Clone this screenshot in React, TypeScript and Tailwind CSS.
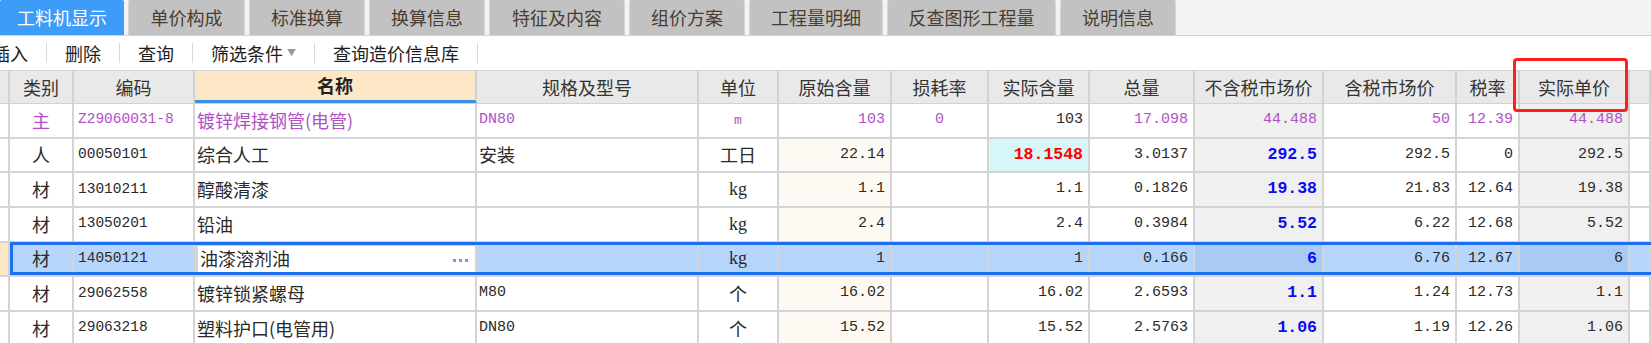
import React from "react";

type Row = {
  type: string;
  code: string;
  name: string;
  spec: string;
  unit: string;
  orig: string;
  loss: string;
  actual: string;
  total: string;
  exTax: string;
  inTax: string;
  rate: string;
  price: string;
  main?: boolean;
  hiActual?: boolean;
  selected?: boolean;
};

const rows: Row[] = [
  { type: "主", code: "Z29060031-8", name: "镀锌焊接钢管(电管)", spec: "DN80", unit: "m", orig: "103", loss: "0", actual: "103", total: "17.098", exTax: "44.488", inTax: "50", rate: "12.39", price: "44.488", main: true },
  { type: "人", code: "00050101", name: "综合人工", spec: "安装", unit: "工日", orig: "22.14", loss: "", actual: "18.1548", total: "3.0137", exTax: "292.5", inTax: "292.5", rate: "0", price: "292.5", hiActual: true },
  { type: "材", code: "13010211", name: "醇酸清漆", spec: "", unit: "kg", orig: "1.1", loss: "", actual: "1.1", total: "0.1826", exTax: "19.38", inTax: "21.83", rate: "12.64", price: "19.38" },
  { type: "材", code: "13050201", name: "铅油", spec: "", unit: "kg", orig: "2.4", loss: "", actual: "2.4", total: "0.3984", exTax: "5.52", inTax: "6.22", rate: "12.68", price: "5.52" },
  { type: "材", code: "14050121", name: "油漆溶剂油", spec: "", unit: "kg", orig: "1", loss: "", actual: "1", total: "0.166", exTax: "6", inTax: "6.76", rate: "12.67", price: "6", selected: true },
  { type: "材", code: "29062558", name: "镀锌锁紧螺母", spec: "M80", unit: "个", orig: "16.02", loss: "", actual: "16.02", total: "2.6593", exTax: "1.1", inTax: "1.24", rate: "12.73", price: "1.1" },
  { type: "材", code: "29063218", name: "塑料护口(电管用)", spec: "DN80", unit: "个", orig: "15.52", loss: "", actual: "15.52", total: "2.5763", exTax: "1.06", inTax: "1.19", rate: "12.26", price: "1.06" },
];

const tabs = [
  { label: "工料机显示", w: "w-[124px]", active: true },
  { label: "单价构成", w: "w-[117px]" },
  { label: "标准换算", w: "w-[116px]" },
  { label: "换算信息", w: "w-[116px]" },
  { label: "特征及内容", w: "w-[136px]" },
  { label: "组价方案", w: "w-[116px]" },
  { label: "工程量明细", w: "w-[134px]" },
  { label: "反查图形工程量", w: "w-[169px]" },
  { label: "说明信息", w: "w-[116px]" },
];

const GRID =
  "grid grid-cols-[10px_64px_121px_282px_222px_80px_113px_97px_101px_105px_129px_133px_63px_110px_1fr]";

const CJK = "font-['Noto_Sans_CJK_SC',sans-serif]";
const MONO = "font-['Liberation_Mono','Noto_Sans_CJK_SC',monospace]";

const headers = [
  "",
  "类别",
  "编码",
  "名称",
  "规格及型号",
  "单位",
  "原始含量",
  "损耗率",
  "实际含量",
  "总量",
  "不含税市场价",
  "含税市场价",
  "税率",
  "实际单价",
  "",
];

function Sep() {
  return <div className="w-px h-[20px] bg-[#d9d9d9]" />;
}

export default function App() {
  return (
    <div className={`w-[1651px] h-[343px] overflow-hidden bg-white relative ${CJK}`}>
      {/* Tab bar */}
      <div className="h-[36px] bg-[#f3f3f3] border-b border-[#d4d4d4] flex gap-[4px] overflow-hidden">
        {tabs.map((t) => (
          <div
            key={t.label}
            className={`${t.w} shrink-0 h-full flex items-center justify-center text-[18px] rounded-t-[2px] ${
              t.active
                ? "bg-[#3d9cf7] text-white"
                : "bg-[#c2c2c2] text-[#4a3d31] border-x border-[#d6d6d6]"
            }`}
          >
            {t.label}
          </div>
        ))}
      </div>

      {/* Toolbar */}
      <div className="h-[34px] flex items-center gap-[18px] text-[18px] text-[#1e1e1e] overflow-hidden">
        <span className="ml-[-8px]">插入</span>
        <Sep />
        <span>删除</span>
        <Sep />
        <span>查询</span>
        <Sep />
        <span className="flex items-center">
          筛选条件
          <span className="ml-[4px] text-[9px] text-[#9a9a9a]">▼</span>
        </span>
        <Sep />
        <span>查询造价信息库</span>
        <Sep />
      </div>

      {/* Header row */}
      <div className={`${GRID} h-[34px] bg-[#e9e9e9] border-y border-[#d2d2d2] text-[18px] text-[#333]`}>
        {headers.map((h, i) => (
          <div
            key={i}
            className={`flex items-center justify-center border-r-2 border-[#d2d2d2] ${
              i === 3 ? "bg-[#fde7c7] font-bold text-[#222] border-b-[3px] border-b-[#3d8ee9]" : ""
            }`}
          >
            {h}
          </div>
        ))}
      </div>

      {/* Data rows */}
      {rows.map((r, idx) => {
        const sel = !!r.selected;
        const txt = r.main ? "text-[#b24fc6]" : "text-[#2a2a2a]";
        const base = `h-full flex items-center border-r-2 border-[#d4d4d4] overflow-hidden whitespace-nowrap`;
        const grayBg = sel ? "bg-[#a9caf3]" : "bg-[#f0f0f0]";
        const rowBg = sel ? "bg-[#b6d5fb]" : "";
        const num = `${MONO} text-[15px] justify-end pr-[5px]`;
        return (
          <div key={idx} className={`${GRID} h-[34.67px] border-b-2 border-[#d4d4d4] relative ${rowBg} ${txt}`}>
            <div className={`${base} ${sel ? "bg-[#fde7c7]" : ""}`} />
            <div className={`${base} justify-center text-[18px]`}>{r.type}</div>
            <div className={`${base} ${MONO} text-[14.5px] pl-[4px]`}>{r.code}</div>
            <div
              className={`${base} text-[18px] pl-[2px] ${
                sel ? "bg-white border-[3px] border-[#1d6ff2] relative" : ""
              }`}
            >
              {r.name}
              {sel && (
                <span className="absolute right-[7px] top-[13px] flex gap-[3px]">
                  <span className="w-[3px] h-[3px] bg-[#6aa3dc]" />
                  <span className="w-[3px] h-[3px] bg-[#6aa3dc]" />
                  <span className="w-[3px] h-[3px] bg-[#6aa3dc]" />
                </span>
              )}
            </div>
            <div className={`${base} pl-[2px] ${/^[A-Z0-9]+$/.test(r.spec) ? `${MONO} text-[15px]` : "text-[18px]"}`}>
              {r.spec}
            </div>
            <div
              className={`${base} justify-center ${
                r.unit === "kg"
                  ? "font-['Liberation_Serif',serif] text-[18px]"
                  : r.unit === "m"
                  ? `${MONO} text-[13px]`
                  : "text-[18px]"
              }`}
            >
              {r.unit}
            </div>
            <div className={`${base} ${num} ${!r.main && !sel ? "bg-[#fefaf3]" : ""}`}>{r.orig}</div>
            <div className={`${base} ${MONO} text-[15px] justify-center`}>{r.loss}</div>
            <div
              className={`${base} ${num} ${r.main ? "text-[#2a2a2a]" : ""} ${
                r.hiActual ? "bg-[#d6f6f8] text-[#ff0000] font-bold !text-[16.5px]" : ""
              }`}
            >
              {r.actual}
            </div>
            <div className={`${base} ${num}`}>{r.total}</div>
            <div
              className={`${base} ${num} ${grayBg} ${
                r.main ? "" : "text-[#0a0af5] font-bold !text-[16.5px]"
              }`}
            >
              {r.exTax}
            </div>
            <div className={`${base} ${num}`}>{r.inTax}</div>
            <div className={`${base} ${num}`}>{r.rate}</div>
            <div className={`${base} ${num} ${grayBg}`}>{r.price}</div>
            <div className={`${base} border-r-0`} />
            {sel && (
              <div className="absolute left-[10px] right-0 top-[-1px] bottom-0 border-y-[3px] border-l-[3px] border-[#1d6ff2] pointer-events-none" />
            )}
          </div>
        );
      })}

      {/* Red highlight box */}
      <div className="absolute left-[1513px] top-[58px] w-[115px] h-[54px] border-[3px] border-[#ff1f1f] rounded-[4px] pointer-events-none" />
    </div>
  );
}
